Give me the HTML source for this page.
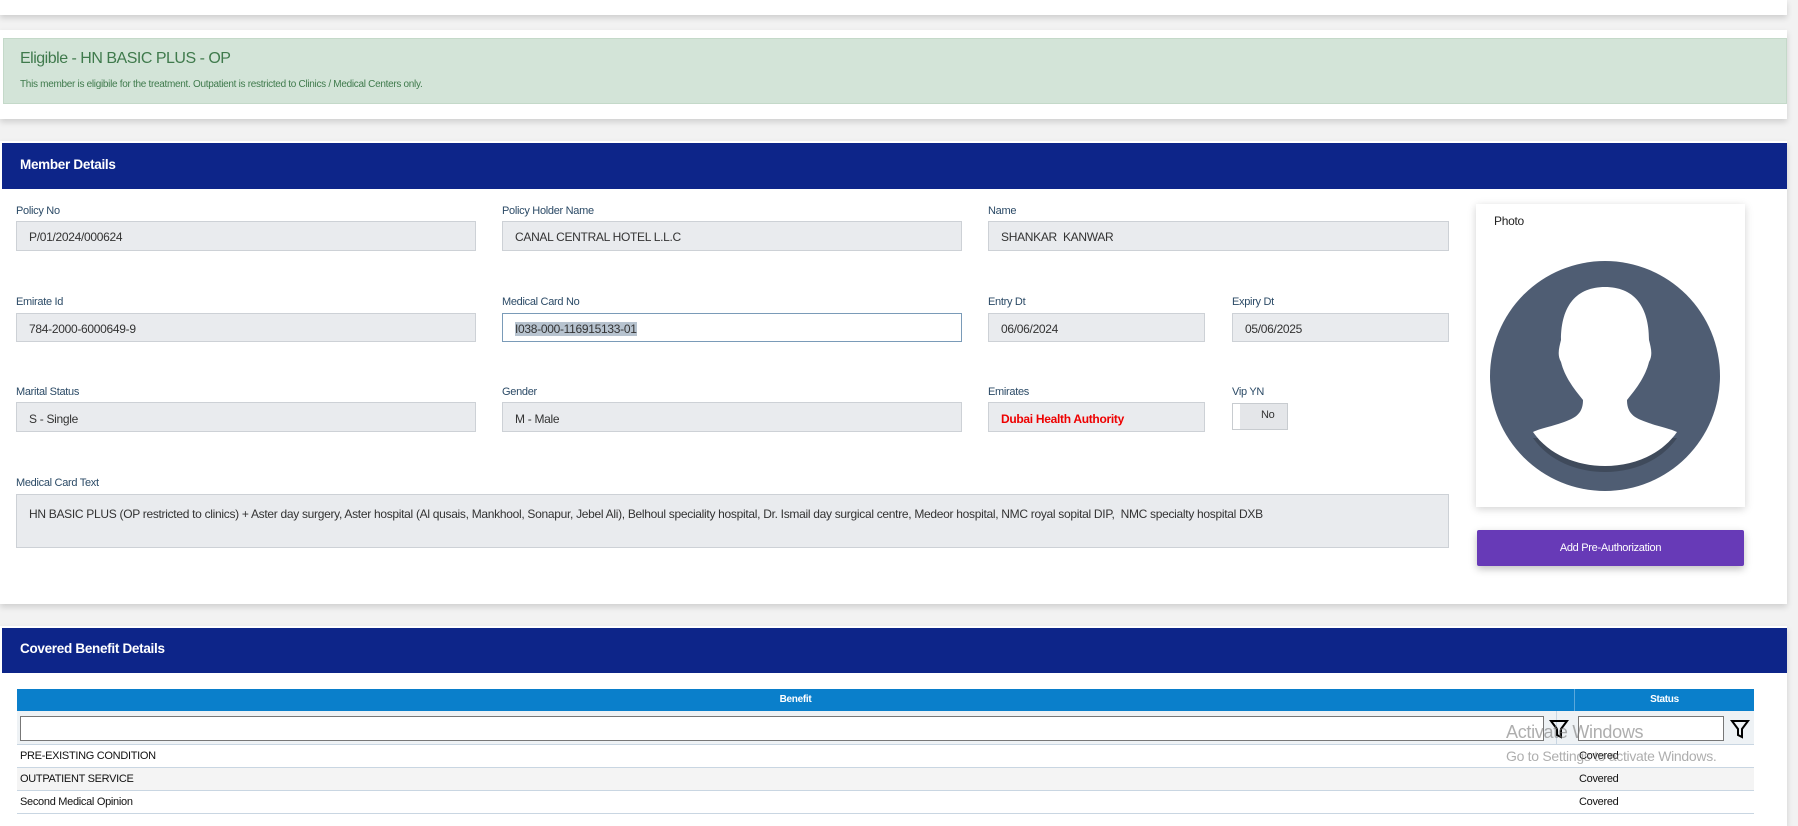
<!DOCTYPE html>
<html><head><style>
*{box-sizing:border-box;margin:0;padding:0}
body{width:1798px;height:807px;overflow:hidden;background:#f2f2f2;font-family:"Liberation Sans",sans-serif;position:relative;letter-spacing:-0.3px}
.abs{position:absolute}
.card{position:absolute;background:#fff;box-shadow:0 3px 6px rgba(0,0,0,.15)}
.lbl{position:absolute;font-size:11px;color:#2b4a66}
.inp{position:absolute;background:#e9ebee;border:1px solid #cdd1d6;font-size:12px;color:#333;padding-left:12px;line-height:30px}
.hdr{position:absolute;left:2px;width:1785px;background:#0d2589;color:#fff;font-size:14px;padding-left:18px}
.row{position:absolute;left:17px;width:1737px;height:23px;border-bottom:1px solid #c9d6e2;font-size:11px;color:#111;line-height:22px}
</style></head><body>
<div class="card" style="left:0;top:0;width:1787px;height:15px"></div>
<div class="card" style="left:0;top:30px;width:1787px;height:89px"></div>
<div class="abs" style="left:3px;top:38px;width:1784px;height:66px;background:#d3e4d8;border:1px solid #c4d9c9"></div>
<div class="abs" style="left:20px;top:50px;font-size:16px;color:#3f7a4c;letter-spacing:-0.5px">Eligible - HN BASIC PLUS - OP</div>
<div class="abs" style="left:20px;top:79px;font-size:10px;color:#3f7a4c;letter-spacing:-0.3px">This member is eligibile for the treatment. Outpatient is restricted to Clinics / Medical Centers only.</div>

<div class="card" style="left:0;top:141px;width:1787px;height:463px"></div>
<div class="hdr" style="top:143px;height:46px;line-height:44px;font-weight:bold;font-size:13.5px">Member Details</div>

<div class="lbl" style="left:16px;top:205px">Policy No</div>
<div class="inp" style="left:16px;top:221px;width:460px;height:30px">P/01/2024/000624</div>
<div class="lbl" style="left:502px;top:205px">Policy Holder Name</div>
<div class="inp" style="left:502px;top:221px;width:460px;height:30px">CANAL CENTRAL HOTEL L.L.C</div>
<div class="lbl" style="left:988px;top:205px">Name</div>
<div class="inp" style="left:988px;top:221px;width:461px;height:30px">SHANKAR&nbsp; KANWAR</div>

<div class="lbl" style="left:16px;top:296px">Emirate Id</div>
<div class="inp" style="left:16px;top:313px;width:460px;height:29px">784-2000-6000649-9</div>
<div class="lbl" style="left:502px;top:296px">Medical Card No</div>
<div class="inp" style="left:502px;top:313px;width:460px;height:29px;background:#fff;border-color:#7a9bb8"><span style="background:#b7c3cf">I038-000-116915133-01</span></div>
<div class="lbl" style="left:988px;top:296px">Entry Dt</div>
<div class="inp" style="left:988px;top:313px;width:217px;height:29px">06/06/2024</div>
<div class="lbl" style="left:1232px;top:296px">Expiry Dt</div>
<div class="inp" style="left:1232px;top:313px;width:217px;height:29px">05/06/2025</div>

<div class="lbl" style="left:16px;top:386px">Marital Status</div>
<div class="inp" style="left:16px;top:402px;width:460px;height:30px;line-height:32px">S - Single</div>
<div class="lbl" style="left:502px;top:386px">Gender</div>
<div class="inp" style="left:502px;top:402px;width:460px;height:30px;line-height:32px">M - Male</div>
<div class="lbl" style="left:988px;top:386px">Emirates</div>
<div class="inp" style="left:988px;top:402px;width:217px;height:30px;line-height:32px;color:#e00;font-weight:bold">Dubai Health Authority</div>
<div class="lbl" style="left:1232px;top:386px">Vip YN</div>
<div class="abs" style="left:1232px;top:403px;width:56px;height:27px;background:#e4e6e9;border:1px solid #c8ccd0;font-size:11px;color:#333;line-height:22px;padding-left:28px">No</div>
<div class="abs" style="left:1233px;top:404px;width:7px;height:25px;background:#fff"></div>

<div class="lbl" style="left:16px;top:477px">Medical Card Text</div>
<div class="inp" style="left:16px;top:494px;width:1433px;height:54px;line-height:14px;padding-top:12px;letter-spacing:-0.3px">HN BASIC PLUS (OP restricted to clinics) + Aster day surgery, Aster hospital (Al qusais, Mankhool, Sonapur, Jebel Ali), Belhoul speciality hospital, Dr. Ismail day surgical centre, Medeor hospital, NMC royal sopital DIP,&nbsp; NMC specialty hospital DXB</div>

<div class="card" style="left:1476px;top:204px;width:269px;height:303px;box-shadow:0 2px 8px rgba(0,0,0,.18)"></div>
<div class="abs" style="left:1494px;top:214px;font-size:12px;color:#222">Photo</div>
<svg class="abs" style="left:1489px;top:260px" width="232" height="232" viewBox="0 0 232 232">
<circle cx="116" cy="116" r="115" fill="#4f5d73"/>
<path d="M44 178C60 201 88 212 116 212C144 212 172 201 188 178Z" fill="#3f4a5b"/>
<path d="M116 27C88 27 72 45 72 80C70 88 68 95 72 102C76 118 86 130 94 140C94 150 90 156 80 160C66 166 52 168 44 172C60 195 88 206 116 206C144 206 172 195 188 172C180 168 166 166 152 160C142 156 138 150 138 140C146 130 156 118 160 102C164 95 162 88 160 80C160 45 144 27 116 27Z" fill="#fff"/>
</svg>
<div class="abs" style="left:1477px;top:530px;width:267px;height:36px;background:#673ab7;border-radius:2px;color:#fff;font-size:11px;text-align:center;line-height:36px;box-shadow:0 3px 8px rgba(0,0,0,.25)">Add Pre-Authorization</div>

<div class="card" style="left:0;top:626px;width:1787px;height:200px"></div>
<div class="hdr" style="top:628px;height:45px;line-height:42px;font-weight:bold;font-size:13.5px">Covered Benefit Details</div>
<div class="abs" style="left:17px;top:689px;width:1737px;height:22px;background:#0a7fcb;color:#fff;font-size:10px;font-weight:bold;line-height:22px">
<span class="abs" style="left:0;width:1557px;text-align:center">Benefit</span>
<span class="abs" style="left:1557px;width:180px;text-align:center;border-left:1px solid #5aa8dc">Status</span></div>
<div class="abs" style="left:17px;top:711px;width:1737px;height:34px;background:#eef2f5;border-bottom:1px solid #c9d6e2"></div>
<div class="abs" style="left:20px;top:716px;width:1524px;height:25px;background:#fff;border:1px solid #777"></div>
<div class="abs" style="left:1556px;top:711px;width:1px;height:103px;background:#c9d6e2"></div>
<div class="abs" style="left:1578px;top:716px;width:146px;height:25px;background:#fff;border:1px solid #777"></div>
<svg class="abs" style="left:1549px;top:719px" width="20" height="20" viewBox="0 0 20 20"><path d="M2 2h16l-6 8v8l-4-2v-6z" fill="none" stroke="#000" stroke-width="2"/></svg>
<svg class="abs" style="left:1730px;top:719px" width="20" height="20" viewBox="0 0 20 20"><path d="M2 2h16l-6 8v8l-4-2v-6z" fill="none" stroke="#000" stroke-width="2"/></svg>
<div class="row" style="top:745px;background:#fff"><span style="padding-left:3px">PRE-EXISTING CONDITION</span><span class="abs" style="left:1562px">Covered</span></div>
<div class="row" style="top:768px;background:#f4f4f4"><span style="padding-left:3px">OUTPATIENT SERVICE</span><span class="abs" style="left:1562px">Covered</span></div>
<div class="row" style="top:791px;background:#fff"><span style="padding-left:3px">Second Medical Opinion</span><span class="abs" style="left:1562px">Covered</span></div>
<div class="abs" style="left:1506px;top:722px;font-size:18px;color:rgba(120,120,120,.6)">Activate Windows</div>
<div class="abs" style="left:1506px;top:748px;font-size:14px;color:rgba(120,120,120,.6)">Go to Settings to activate Windows.</div>
</body></html>
